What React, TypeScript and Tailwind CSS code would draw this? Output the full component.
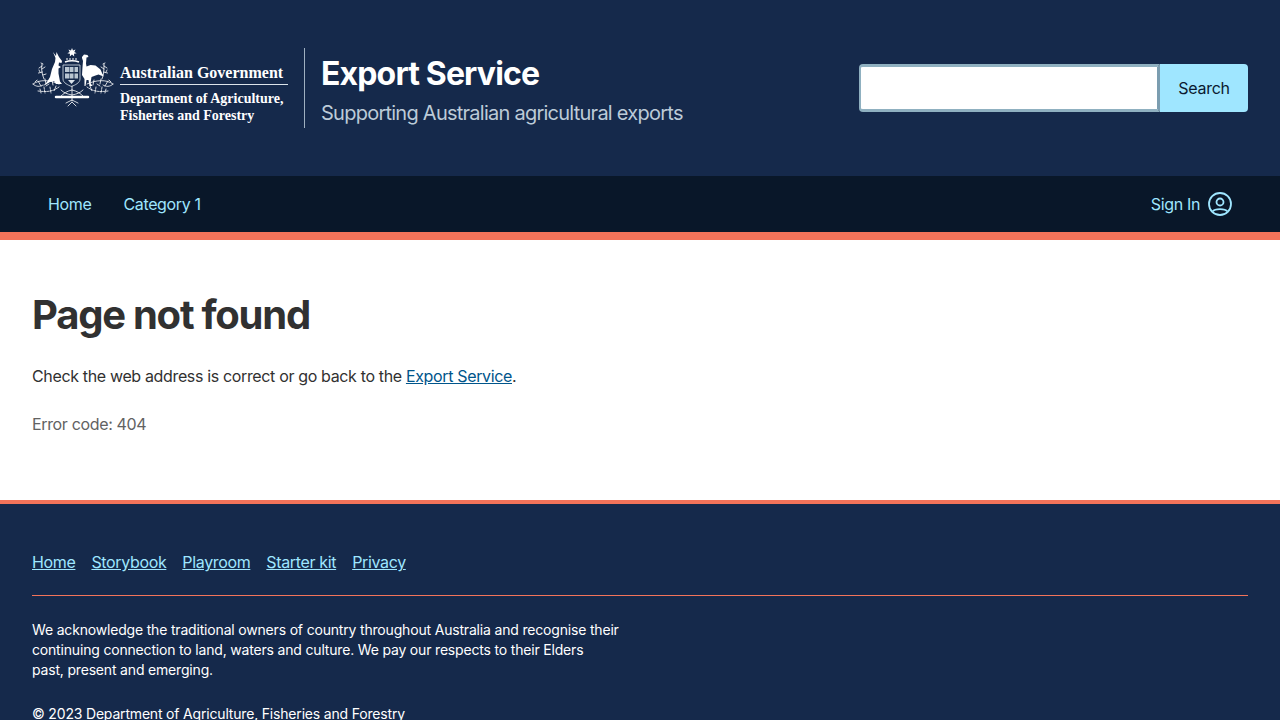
const footerLinks = ["Home", "Storybook", "Playroom", "Starter kit", "Privacy"];

function Crest() {
  return (
    <svg viewBox="0 0 82 60" className="h-[60px] w-[82px] shrink-0 self-start" fill="none">
      {/* star */}
      <path d="M40 0l1 2.500 2.500-1-1.200 2.500 2.400 1.200-2.700.5.2 2.800-2.200-2-2.200 2 .2-2.800-2.700-.5 2.400-1.200L36.500 1.500l2.500 1z" fill="#fff" />
      <path d="M34 11h12" stroke="#fff" strokeWidth="1" strokeDasharray="2 1" />
      <path d="M33 14c4-1.500 10-1.500 14 0" stroke="#fff" strokeWidth="1.500" />
      {/* kangaroo */}
      <path d="M21 4l3 4 .5-4 2.500 5 3 4-.5 2-2.500-.5-.5 3 2.500 1.500-2.500 1.500 0 5 1.500 8 2 2.500h-6l-2-3-4 1-5 3-2 1 4-4 3-5 2-8 3-7 .5-4z" fill="#fff" />
      {/* emu */}
      <path d="M50 9l2-2.500 3.500.5 1 2-2 .5-.5 6 .5 3 4-1.500 5 .5 5 4 3 7-5-2-3 1-4 1.500-1 6 2 3h-3l-1-6-2 0-1 6h-1v-7l-2.500-4 .5-8 .5-6-1-3z" fill="#fff" />
      {/* shield */}
      <path d="M31 17h17v14c0 4-5 6-8.500 7.500C36 37 31 35 31 31z" fill="#15294b" stroke="#dbe3ea" strokeWidth="0.8" />
      <path d="M33 19h4v5h-4zM37.500 19h4v5h-4zM42.500 19h3.500v5h-3.500zM33 25.500h4v5h-4zM37.500 25.500h4v5h-4zM42.500 25.500h3.500v5h-3.500z" fill="#b9c6d2" />
      <path d="M36 32h7l-3.500 4z" fill="#dbe3ea" />
      {/* wattle */}
      <g stroke="#fff" strokeWidth="0.8" strokeLinecap="round">
        <path d="M12 31c-2-5-3-9-2-15M10 18l-3 2M10 21l3-2M10.500 24l-4 1M11 27l3-1M9 15l2 1M7 22l1 2" />
        <path d="M70 31c2-5 2-9 2-15M72 18l3 2M72 21l-3-2M71.500 24l4 1M71 27l-3-1M73 15l-2 1M75 22l-1 2" />
        <path d="M1 36c7-5 17-4 26 0M1 36c3 3 7 3 10 1M6 33l3 5M13 31l1 5M20 32l1 5M3 34l2-2M17 36l-3 2" />
        <path d="M81 36c-7-5-17-4-26 0M81 36c-3 3-7 3-10 1M76 33l-3 5M69 31l-1 5M62 32l-1 5M79 34l-2-2M65 36l3 2" />
        <path d="M6 43c8 1 14 1 21-4M12 39l1 6M18 39l1 6M24 38l-2 5M8 41l1 4" strokeDasharray="2 1" />
        <path d="M76 43c-8 1-14 1-21-4M70 39l-1 6M64 39l-1 6M58 38l2 5M74 41l-1 4" strokeDasharray="2 1" />
        <path d="M40 38v15M40 42c-5 1-8 3-12 7M40 42c5 1 8 3 12 7M29 42c3 3 6 4 11 5 5-1 8-2 11-5" />
        <path d="M24 49h32" strokeWidth="2.500" strokeDasharray="2 1" />
        <path d="M34 55l6-3 6 3M36 58l4-4 4 4" />
      </g>
    </svg>
  );
}

function UserIcon() {
  return (
    <svg viewBox="0 0 24 24" className="h-6 w-6" fill="none" stroke="currentColor" strokeWidth="1.8">
      <circle cx="12" cy="12" r="11" />
      <circle cx="12" cy="10" r="3.500" />
      <path d="M4.500 19.500C7 16.300 17 16.300 19.500 19.500" />
    </svg>
  );
}

export default function App() {
  return (
    <div className="h-[720px] overflow-hidden bg-white text-[#313131] [font-family:Inter,'Liberation_Sans',sans-serif]">
      <header className="flex h-[176px] items-center justify-between bg-[#15294b] px-8">
        <div className="flex items-center">
          <div className="flex h-[80px] w-[256px] items-start gap-[6px]">
            <Crest />
            <div className="min-w-0 flex-1 pt-4 text-white [font-family:'Liberation_Serif',serif]">
              <div className="border-b border-[#dbe3ea] pb-[3px] text-base leading-[17px] font-bold whitespace-nowrap">
                Australian Government
              </div>
              <div className="mt-[5px] text-[14px] leading-[17px] font-bold whitespace-nowrap">
                Department of Agriculture,
                <br />
                Fisheries and Forestry
              </div>
            </div>
          </div>
          <div className="ml-4 h-[80px] w-px bg-[#9fb0c0]" />
          <div className="ml-4 self-start pt-[6px]">
            <div className="text-[32px] leading-[40px] font-bold tracking-[-0.85px] text-white">Export Service</div>
            <div className="mt-[5px] text-[20px] leading-[28px] tracking-[-0.75px] text-[#bccbd8]">
              Supporting Australian agricultural exports
            </div>
          </div>
        </div>
        <form className="flex h-[48px] w-[389px]">
          <input
            type="text"
            aria-label="Search"
            className="h-full min-w-0 flex-1 rounded-l-[4px] border-[3px] border-l-2 border-[#8fb0c0] border-r-[#7b9db0] bg-white outline-none"
          />
          <button
            type="button"
            className="h-full w-[88px] rounded-r-[4px] bg-[#9fe6ff] text-base tracking-[-0.3px] text-[#0b1a30]"
          >
            Search
          </button>
        </form>
      </header>

      <nav className="flex h-[64px] items-start justify-between border-b-8 border-[#f2735a] bg-[#091729] px-8 text-base tracking-[-0.35px] text-[#9fe6ff]">
        <ul className="flex">
          <li className="flex h-[56px] items-center px-4">Home</li>
          <li className="flex h-[56px] items-center px-4">Category 1</li>
        </ul>
        <div className="flex h-[56px] items-center gap-2 px-4">
          <span>Sign In</span>
          <UserIcon />
        </div>
      </nav>

      <main className="h-[260px] px-8 pt-[49px]">
        <h1 className="text-[40px] leading-[52px] font-bold tracking-[-1.25px] text-[#313131]">Page not found</h1>
        <p className="mt-[23px] text-base leading-6 tracking-[-0.35px] text-[#313131]">
          Check the web address is correct or go back to the{" "}
          <a href="#" className="text-[#00558b] underline">
            Export Service
          </a>
          .
        </p>
        <p className="mt-6 text-base leading-6 tracking-[-0.35px] text-[#626262]">Error code: 404</p>
      </main>

      <footer className="border-t-4 border-[#f2735a] bg-[#15294b] px-8 pt-[46px] pb-8 text-white">
        <ul className="flex gap-4 text-base leading-6 tracking-[-0.35px] text-[#9fe6ff]">
          {footerLinks.map((link) => (
            <li key={link}>
              <a href="#" className="underline">
                {link}
              </a>
            </li>
          ))}
        </ul>
        <div className="mt-[21px] h-px bg-[#f2735a]" />
        <p className="mt-6 text-sm leading-5 tracking-[-0.18px] whitespace-nowrap">
          We acknowledge the traditional owners of country throughout Australia and recognise their
          <br />
          continuing connection to land, waters and culture. We pay our respects to their Elders
          <br />
          past, present and emerging.
        </p>
        <p className="mt-6 text-sm leading-5 tracking-[-0.18px]">© 2023 Department of Agriculture, Fisheries and Forestry</p>
      </footer>
    </div>
  );
}
